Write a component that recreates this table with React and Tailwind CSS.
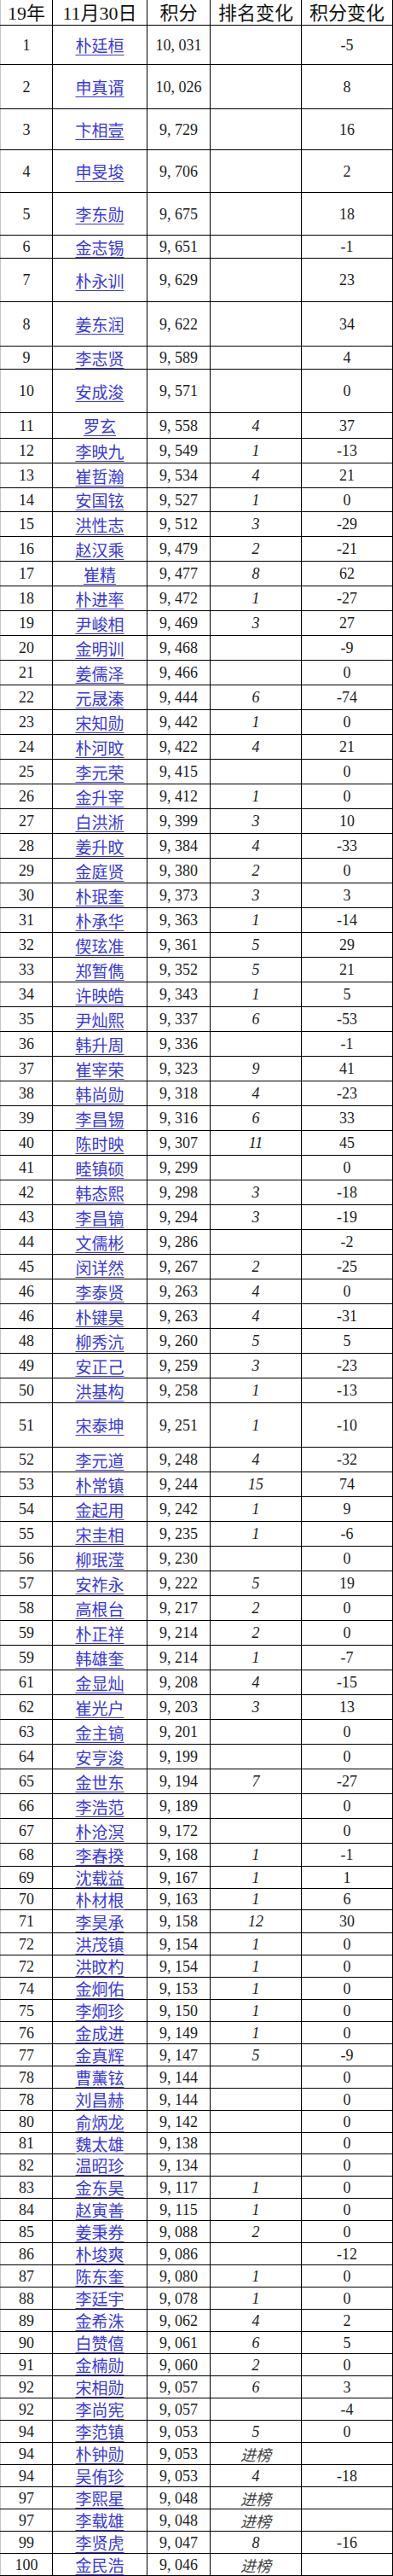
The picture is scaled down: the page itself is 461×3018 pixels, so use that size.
const RAW = `1|朴廷桓|10,031||-5
2|申真谞|10,026||8
3|卞相壹|9,729||16
4|申旻埈|9,706||2
5|李东勋|9,675||18
6|金志锡|9,651||-1
7|朴永训|9,629||23
8|姜东润|9,622||34
9|李志贤|9,589||4
10|安成浚|9,571||0
11|罗玄|9,558|4|37
12|李映九|9,549|1|-13
13|崔哲瀚|9,534|4|21
14|安国铉|9,527|1|0
15|洪性志|9,512|3|-29
16|赵汉乘|9,479|2|-21
17|崔精|9,477|8|62
18|朴进率|9,472|1|-27
19|尹峻相|9,469|3|27
20|金明训|9,468||-9
21|姜儒泽|9,466||0
22|元晟溱|9,444|6|-74
23|宋知勋|9,442|1|0
24|朴河旼|9,422|4|21
25|李元荣|9,415||0
26|金升宰|9,412|1|0
27|白洪淅|9,399|3|10
28|姜升旼|9,384|4|-33
29|金庭贤|9,380|2|0
30|朴珉奎|9,373|3|3
31|朴承华|9,363|1|-14
32|偰玹准|9,361|5|29
33|郑暂儁|9,352|5|21
34|许映皓|9,343|1|5
35|尹灿熙|9,337|6|-53
36|韩升周|9,336||-1
37|崔宰荣|9,323|9|41
38|韩尚勋|9,318|4|-23
39|李昌锡|9,316|6|33
40|陈时映|9,307|11|45
41|睦镇硕|9,299||0
42|韩态熙|9,298|3|-18
43|李昌镐|9,294|3|-19
44|文儒彬|9,286||-2
45|闵详然|9,267|2|-25
46|李泰贤|9,263|4|0
46|朴键昊|9,263|4|-31
48|柳秀沆|9,260|5|5
49|安正己|9,259|3|-23
50|洪基构|9,258|1|-13
51|宋泰坤|9,251|1|-10
52|李元道|9,248|4|-32
53|朴常镇|9,244|15|74
54|金起用|9,242|1|9
55|宋圭相|9,235|1|-6
56|柳珉滢|9,230||0
57|安祚永|9,222|5|19
58|高根台|9,217|2|0
59|朴正祥|9,214|2|0
59|韩雄奎|9,214|1|-7
61|金显灿|9,208|4|-15
62|崔光户|9,203|3|13
63|金主镐|9,201||0
64|安亨浚|9,199||0
65|金世东|9,194|7|-27
66|李浩范|9,189||0
67|朴沧溟|9,172||0
68|李春揆|9,168|1|-1
69|沈载益|9,167|1|1
70|朴材根|9,163|1|6
71|李昊承|9,158|12|30
72|洪茂镇|9,154|1|0
72|洪旼杓|9,154|1|0
74|金炯佑|9,153|1|0
75|李炯珍|9,150|1|0
76|金成进|9,149|1|0
77|金真辉|9,147|5|-9
78|曹薰铉|9,144||0
78|刘昌赫|9,144||0
80|俞炳龙|9,142||0
81|魏太雄|9,138||0
82|温昭珍|9,134||0
83|金东昊|9,117|1|0
84|赵寅善|9,115|1|0
85|姜秉券|9,088|2|0
86|朴埈爽|9,086||-12
87|陈东奎|9,080|1|0
88|李廷宇|9,078|1|0
89|金希洙|9,062|4|2
90|白赞僖|9,061|6|5
91|金楠勋|9,060|2|0
92|宋相勋|9,057|6|3
92|李尚宪|9,057||-4
94|李范镇|9,053|5|0
94|朴钟勋|9,053|进榜|
94|吴侑珍|9,053|4|-18
97|李熙星|9,048|进榜|
97|李载雄|9,048|进榜|
99|李贤虎|9,047|8|-16
100|金民浩|9,046|进榜|`;

// measured row heights (px, bottom line included)
const HEIGHTS = [46, 52, 48, 50, 50, 27, 51, 52, 27, 51, 30];

const H = {
  25: "h-[25px]",
  26: "h-[26px]",
  27: "h-[27px]",
  28: "h-[28px]",
  29: "h-[29px]",
  30: "h-[30px]",
  46: "h-[46px]",
  48: "h-[48px]",
  50: "h-[50px]",
  51: "h-[51px]",
  52: "h-[52px]",
};

function rowHeight(i) {
  if (i < HEIGHTS.length) return HEIGHTS[i];
  if (i === 13) return 28;
  if (i < 50) return 29;
  if (i === 50) return 52;
  if (i < 67) return 29;
  if (i === 67) return 27;
  if (i === 68) return 26;
  if (i === 69) return 25;
  if (i === 70) return 27;
  if (i === 80) return 25;
  return 26;
}

const rows = RAW.split("\n").map((line) => {
  const [rank, name, score, move, diff] = line.split("|");
  return { rank, name, score, move, diff };
});

const cols = "grid grid-cols-[62px_111px_74px_107px_107px]";
const cell = "flex items-center justify-center border-r border-black";
const num = "font-['Liberation_Serif','Noto_Sans_CJK_SC',serif] text-[18px] text-[#1c1c1c] leading-none";

function Score({ value }) {
  const [a, b] = value.split(",");
  return (
    <span>
      {a}
      <span className="inline-block w-[0.5em]">,</span>
      {b}
    </span>
  );
}

function Row({ r, i }) {
  return (
    <div className={`${cols} ${H[rowHeight(i)]} border-b border-black`}>
      <div className={`${cell} ${num} border-l border-l-[#c4c4c4]`}>{r.rank}</div>
      <div className={cell}>
        <a
          href="#"
          className="font-['Noto_Sans_CJK_SC',sans-serif] text-[19px] leading-none text-[#3838e0] underline decoration-1 underline-offset-[3px]"
        >
          {r.name}
        </a>
      </div>
      <div className={`${cell} ${num}`}>
        <Score value={r.score} />
      </div>
      <div className={`${cell} ${num} italic`}>
        {r.move === "进榜" ? (
          <span className="font-['Noto_Sans_CJK_SC',sans-serif] text-[18px] text-[#444]">进榜</span>
        ) : (
          r.move
        )}
      </div>
      <div className={`${cell} ${num}`}>{r.diff}</div>
    </div>
  );
}

export default function App() {
  const head = "flex items-center justify-center border-r border-black pt-[3px] text-[22px] text-[#111] leading-none font-['Liberation_Serif','Noto_Sans_CJK_SC',serif]";

  return (
    <div className="w-[461px] bg-white">
      <div className={`${cols} h-[30px] border-b border-black`}>
        <div className={`${head} border-l border-l-[#c4c4c4]`}>19年</div>
        <div className={head}>11月30日</div>
        <div className={head}>积分</div>
        <div className={head}>排名变化</div>
        <div className={head}>积分变化</div>
      </div>
      {rows.map((r, i) => (
        <Row key={i} r={r} i={i} />
      ))}
    </div>
  );
}
